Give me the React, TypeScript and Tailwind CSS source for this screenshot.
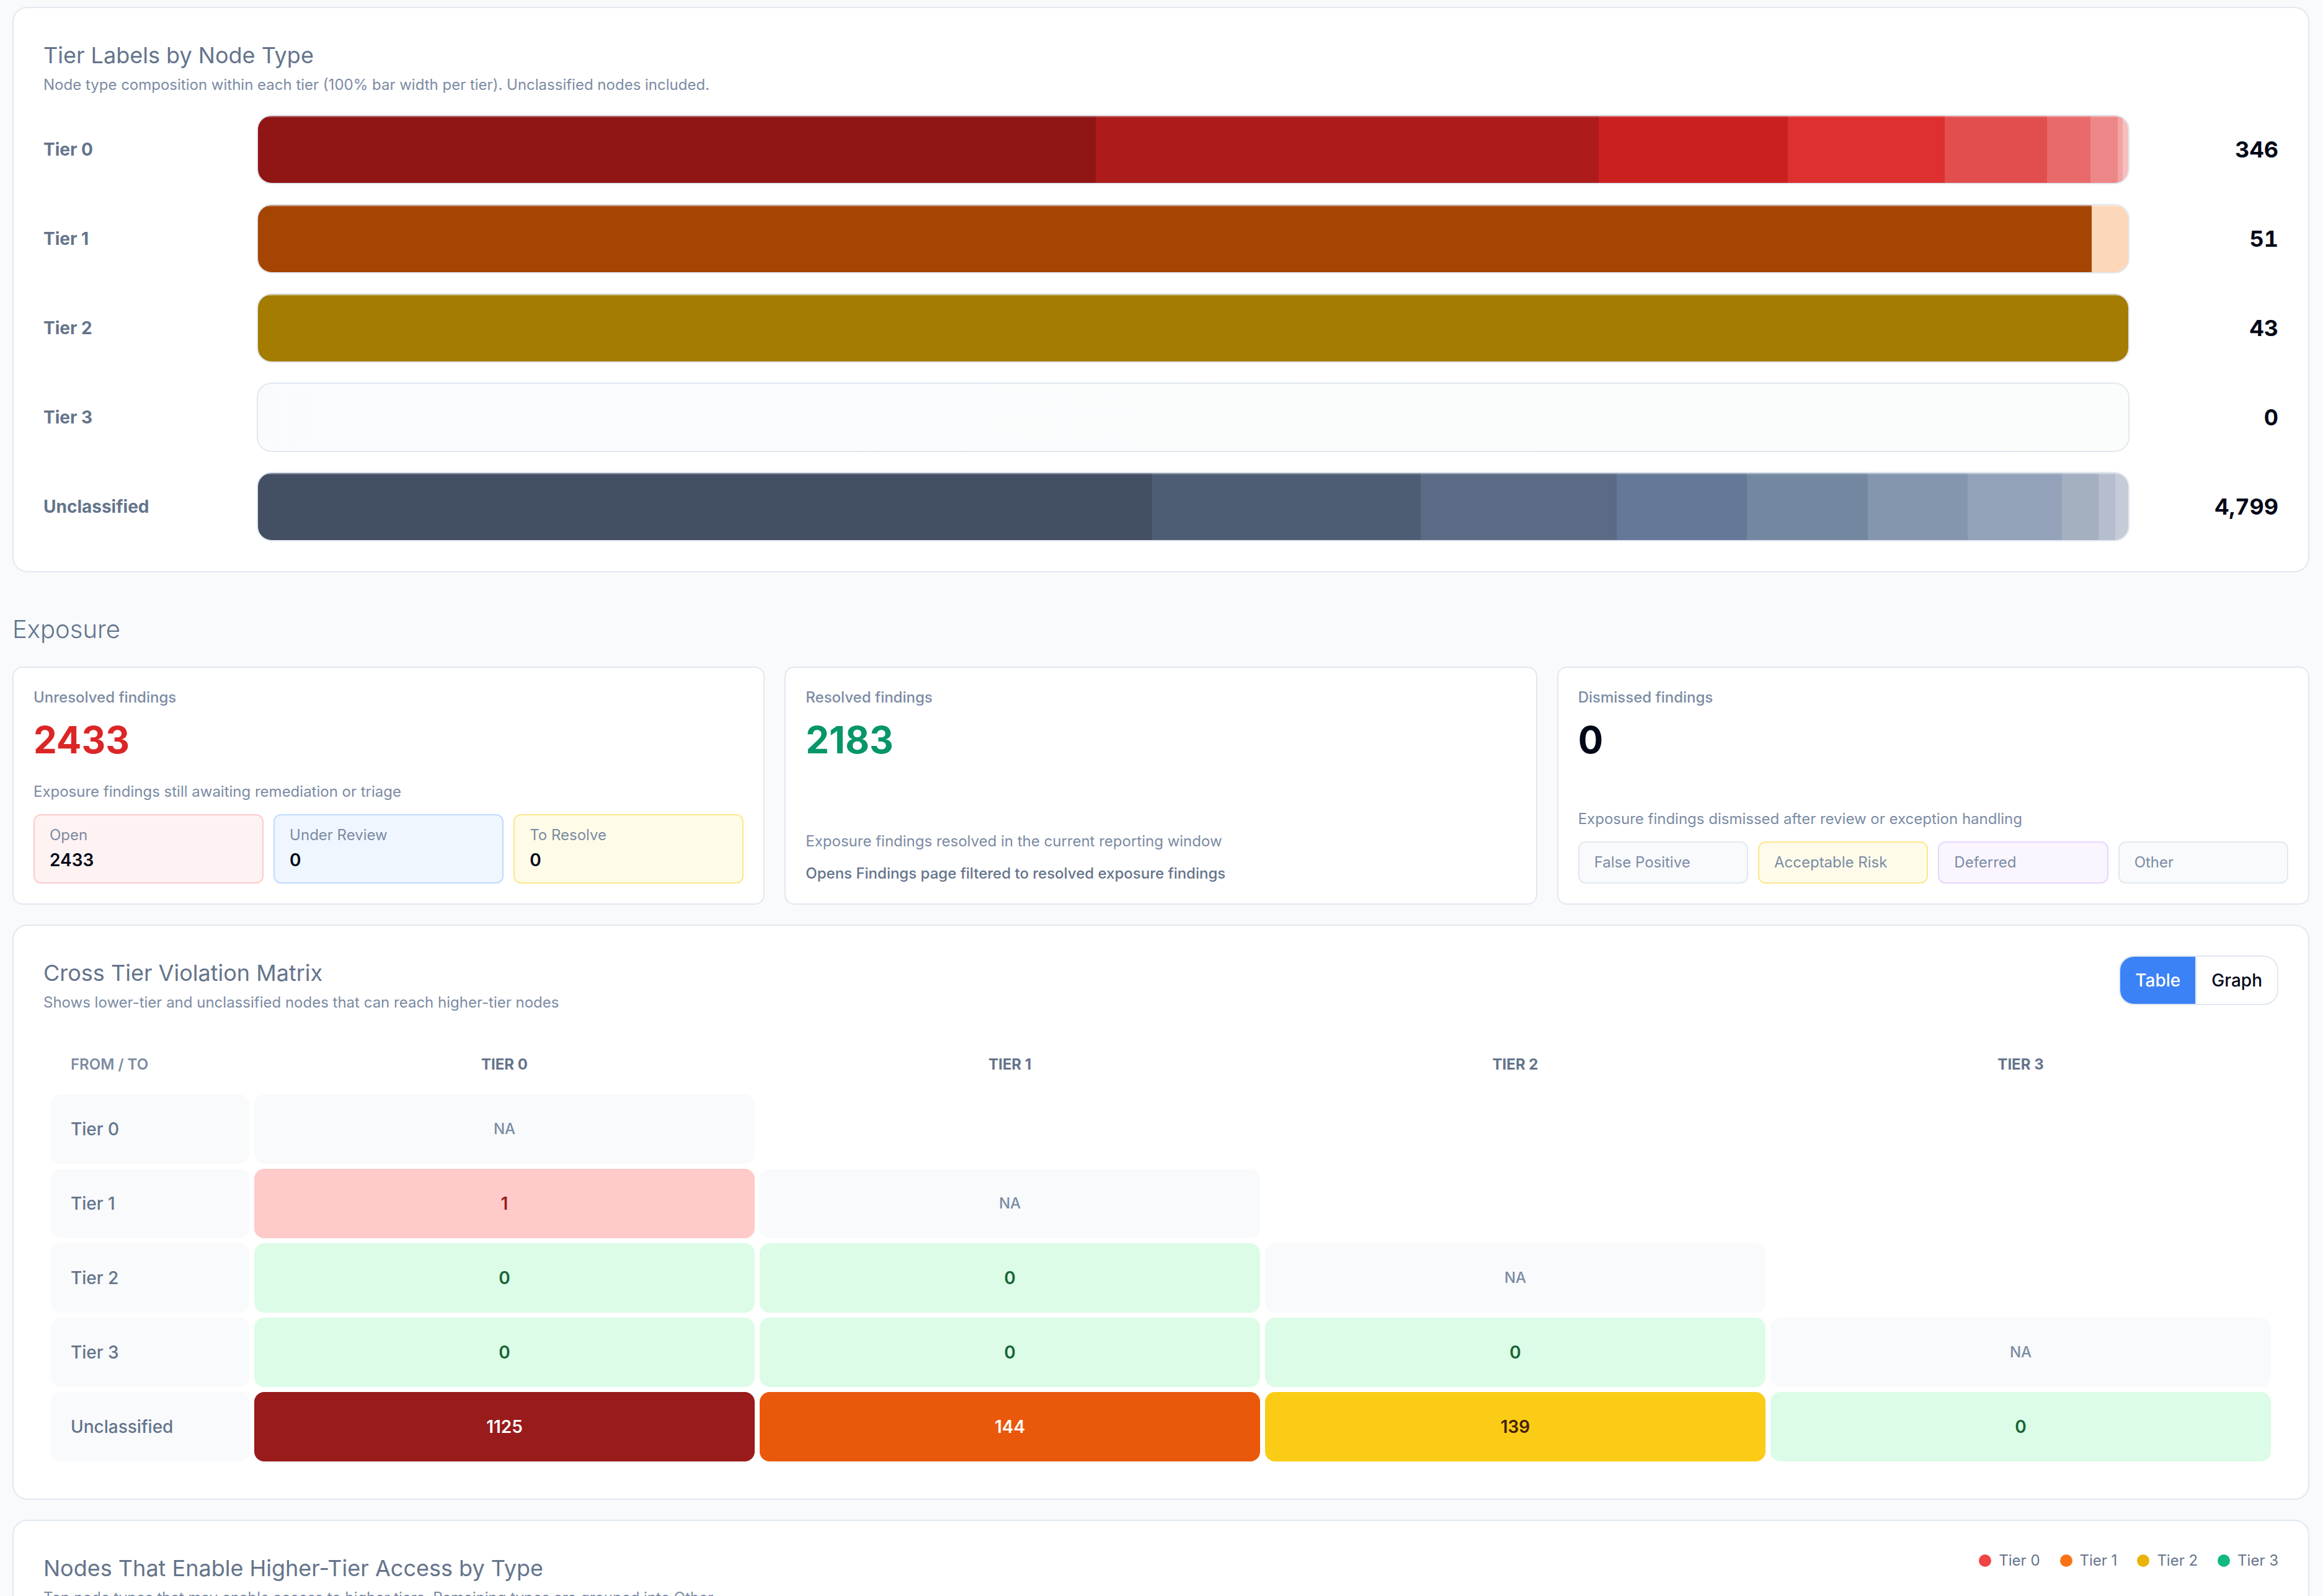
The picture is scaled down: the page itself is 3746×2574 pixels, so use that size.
import { useState } from "react"

interface TierBar {
  label: string
  total: number
  segments: { count: number; color: string }[]
}

const tierBars: TierBar[] = [
  {
    label: "Tier 0",
    total: 346,
    segments: [
      { count: 155, color: "bg-[#901616]" },
      { count: 93, color: "bg-[#ad1b1b]" },
      { count: 35, color: "bg-[#cb2020]" },
      { count: 29, color: "bg-[#de3030]" },
      { count: 19, color: "bg-[#e24d4d]" },
      { count: 8, color: "bg-[#e96a6a]" },
      { count: 5, color: "bg-[#ed8787]" },
      { count: 1, color: "bg-[#f3a3a3]" },
      { count: 1, color: "bg-[#f6bfbf]" },
    ],
  },
  {
    label: "Tier 1",
    total: 51,
    segments: [
      { count: 50, color: "bg-[#a54503]" },
      { count: 1, color: "bg-[#fcd7ba]" },
    ],
  },
  {
    label: "Tier 2",
    total: 43,
    segments: [{ count: 43, color: "bg-[#a47c02]" }],
  },
  { label: "Tier 3", total: 0, segments: [] },
  {
    label: "Unclassified",
    total: 4799,
    segments: [
      { count: 2294, color: "bg-[#435063]" },
      { count: 689, color: "bg-[#4f5d74]" },
      { count: 503, color: "bg-[#5b6b85]" },
      { count: 334, color: "bg-[#647897]" },
      { count: 310, color: "bg-[#7387a0]" },
      { count: 257, color: "bg-[#8495ae]" },
      { count: 242, color: "bg-[#94a2b9]" },
      { count: 94, color: "bg-[#a4afc0]" },
      { count: 42, color: "bg-[#b4bece]" },
      { count: 34, color: "bg-[#c5ccd8]" },
    ],
  },
]

const statusChips = [
  { label: "Open", value: 2433, style: "border-[#fecaca] bg-[#fef2f2]" },
  { label: "Under Review", value: 0, style: "border-[#bfdbfe] bg-[#eff6ff]" },
  { label: "To Resolve", value: 0, style: "border-[#fde68a] bg-[#fefce8]" },
]

const dismissedChips = [
  { label: "False Positive", style: "border-[#e2e8f0] bg-[#f8fafc]" },
  { label: "Acceptable Risk", style: "border-[#fde68a] bg-[#fffbeb]" },
  { label: "Deferred", style: "border-[#e9d5ff] bg-[#faf5ff]" },
  { label: "Other", style: "border-[#e2e8f0] bg-[#f8fafc]" },
]

const tiers = ["Tier 0", "Tier 1", "Tier 2", "Tier 3"]

// null = same tier, shown as NA
const matrix: { from: string; cells: (number | null)[] }[] = [
  { from: "Tier 0", cells: [null] },
  { from: "Tier 1", cells: [1, null] },
  { from: "Tier 2", cells: [0, 0, null] },
  { from: "Tier 3", cells: [0, 0, 0, null] },
  { from: "Unclassified", cells: [1125, 144, 139, 0] },
]

const legend = [
  { label: "Tier 0", color: "bg-[#ef4444]" },
  { label: "Tier 1", color: "bg-[#f97316]" },
  { label: "Tier 2", color: "bg-[#eab308]" },
  { label: "Tier 3", color: "bg-[#10b981]" },
]

function cellStyle(value: number, tier: number) {
  if (value === 0) return "bg-[#dcfce7] text-[#166534]"
  if (value < 10) return "bg-[#fecaca] text-[#991b1b]"
  if (tier === 0) return "bg-[#991b1b] text-white"
  if (tier === 1) return "bg-[#ea580c] text-white"
  return "bg-[#facc15] text-[#422006]"
}

function CardHeader({
  title,
  subtitle,
  children,
}: {
  title: string
  subtitle: string
  children?: React.ReactNode
}) {
  return (
    <div className="mb-8 flex items-start justify-between">
      <div>
        <h3 className="text-[36px] leading-[56px] text-[#64748b]">{title}</h3>
        <p className="mt-1 text-[24px] leading-8 text-[#7b8ba3]">{subtitle}</p>
      </div>
      {children}
    </div>
  )
}

function Card({ children }: { children: React.ReactNode }) {
  return (
    <section className="rounded-3xl border-2 border-[#e2e8f0] bg-white p-12">
      {children}
    </section>
  )
}

function FindingCard({
  label,
  value,
  valueColor,
  description,
  children,
}: {
  label: string
  value: number
  valueColor: string
  description: string
  children: React.ReactNode
}) {
  return (
    <div className="flex flex-col justify-between rounded-2xl border-2 border-[#e2e8f0] bg-white p-8">
      <div>
        <p className="text-[24px] leading-8 font-medium text-[#7b8ba3]">
          {label}
        </p>
        <p
          className={`mt-4 text-[60px] leading-[72px] font-bold ${valueColor}`}
        >
          {value}
        </p>
      </div>
      <div className="mt-8">
        <p className="mb-5 text-[24px] leading-8 text-[#7b8ba3]">
          {description}
        </p>
        {children}
      </div>
    </div>
  )
}

function TierComposition() {
  return (
    <Card>
      <CardHeader
        title="Tier Labels by Node Type"
        subtitle="Node type composition within each tier (100% bar width per tier). Unclassified nodes included."
      />
      <div className="flex flex-col gap-8">
        {tierBars.map((bar) => (
          <div key={bar.label} className="flex items-center gap-6">
            <span className="w-80 text-[28px] leading-10 font-bold text-[#64748b]">
              {bar.label}
            </span>
            <div className="flex h-28 flex-1 overflow-hidden rounded-3xl border-2 border-[#e2e8f0] bg-linear-to-r from-[#fafbfd] to-[#fbfdfc]">
              {bar.segments.map((s, i) => (
                <div
                  key={i}
                  className={`h-full shadow-[inset_0_2px_0_rgba(255,255,255,0.3)] ${s.color}`}
                  style={{ width: `${(s.count / bar.total) * 100}%` }}
                />
              ))}
            </div>
            <span className="w-[216px] text-right text-[36px] leading-[56px] font-bold text-[#020817] tabular-nums">
              {bar.total.toLocaleString("en-US")}
            </span>
          </div>
        ))}
      </div>
    </Card>
  )
}

function ExposureFindings() {
  return (
    <div className="grid grid-cols-3 gap-8">
      <FindingCard
        label="Unresolved findings"
        value={2433}
        valueColor="text-[#dc2626]"
        description="Exposure findings still awaiting remediation or triage"
      >
        <div className="grid grid-cols-3 gap-4">
          {statusChips.map((c) => (
            <div
              key={c.label}
              className={`rounded-xl border-2 px-6 py-4 ${c.style}`}
            >
              <p className="text-[24px] leading-8 text-[#7b8ba3]">{c.label}</p>
              <p className="mt-1 text-[28px] leading-10 font-semibold text-[#020817]">
                {c.value}
              </p>
            </div>
          ))}
        </div>
      </FindingCard>
      <FindingCard
        label="Resolved findings"
        value={2183}
        valueColor="text-[#059669]"
        description="Exposure findings resolved in the current reporting window"
      >
        <p className="text-[24px] leading-8 font-medium text-[#64748b]">
          Opens Findings page filtered to resolved exposure findings
        </p>
      </FindingCard>
      <FindingCard
        label="Dismissed findings"
        value={0}
        valueColor="text-[#020817]"
        description="Exposure findings dismissed after review or exception handling"
      >
        <div className="grid grid-cols-4 gap-4">
          {dismissedChips.map((c) => (
            <div
              key={c.label}
              className={`rounded-xl border-2 px-6 py-4 text-[24px] leading-8 text-[#7b8ba3] ${c.style}`}
            >
              {c.label}
            </div>
          ))}
        </div>
      </FindingCard>
    </div>
  )
}

function ViolationMatrix() {
  const [view, setView] = useState("Table")

  return (
    <Card>
      <CardHeader
        title="Cross Tier Violation Matrix"
        subtitle="Shows lower-tier and unclassified nodes that can reach higher-tier nodes"
      >
        <div className="flex h-20 divide-x-2 divide-[#e2e8f0] overflow-hidden rounded-3xl border-2 border-[#e2e8f0]">
          {["Table", "Graph"].map((v) => (
            <button
              key={v}
              type="button"
              onClick={() => setView(v)}
              className={`px-6 text-[28px] leading-10 font-medium ${
                view === v ? "bg-[#3b82f6] text-white" : "text-[#020817]"
              }`}
            >
              {v}
            </button>
          ))}
        </div>
      </CardHeader>
      <div className="p-1">
        <table className="w-full table-fixed border-separate border-spacing-2">
          <thead>
            <tr className="text-[24px] leading-8 uppercase">
              <th className="w-80 px-8 py-6 text-left font-semibold text-[#7b8ba3]">
                From / To
              </th>
              {tiers.map((t) => (
                <th key={t} className="py-6 font-bold text-[#64748b]">
                  {t}
                </th>
              ))}
            </tr>
          </thead>
          <tbody>
            {matrix.map((row) => (
              <tr key={row.from} className="text-[28px] leading-10">
                <th className="rounded-2xl bg-[#f8fafc] px-8 py-9 text-left font-medium text-[#64748b]">
                  {row.from}
                </th>
                {tiers.map((t, i) => {
                  const value = row.cells[i]
                  if (value === undefined) return <td key={t} />
                  if (value === null)
                    return (
                      <td
                        key={t}
                        className="rounded-2xl bg-[#f8fafc] text-center text-[24px] font-medium text-[#7b8ba3]"
                      >
                        NA
                      </td>
                    )
                  return (
                    <td
                      key={t}
                      className={`rounded-2xl text-center font-semibold ${cellStyle(value, i)}`}
                    >
                      {value}
                    </td>
                  )
                })}
              </tr>
            ))}
          </tbody>
        </table>
      </div>
    </Card>
  )
}

export default function App() {
  return (
    <main className="h-screen overflow-hidden bg-[#f8fafc] pt-[11px] pr-[22px] pl-5 font-['Inter',sans-serif]">
      <TierComposition />
      <h2 className="mt-16 mb-8 text-[40px] leading-[56px] font-light text-[#64748b]">
        Exposure
      </h2>
      <div className="flex flex-col gap-8">
        <ExposureFindings />
        <ViolationMatrix />
        <Card>
          <CardHeader
            title="Nodes That Enable Higher-Tier Access by Type"
            subtitle="Top node types that may enable access to higher tiers. Remaining types are grouped into Other."
          >
            <ul className="flex gap-8">
              {legend.map((l) => (
                <li
                  key={l.label}
                  className="flex items-center gap-3 text-[24px] leading-8 text-[#64748b]"
                >
                  <span className={`h-5 w-5 rounded-full ${l.color}`} />
                  {l.label}
                </li>
              ))}
            </ul>
          </CardHeader>
        </Card>
      </div>
    </main>
  )
}
